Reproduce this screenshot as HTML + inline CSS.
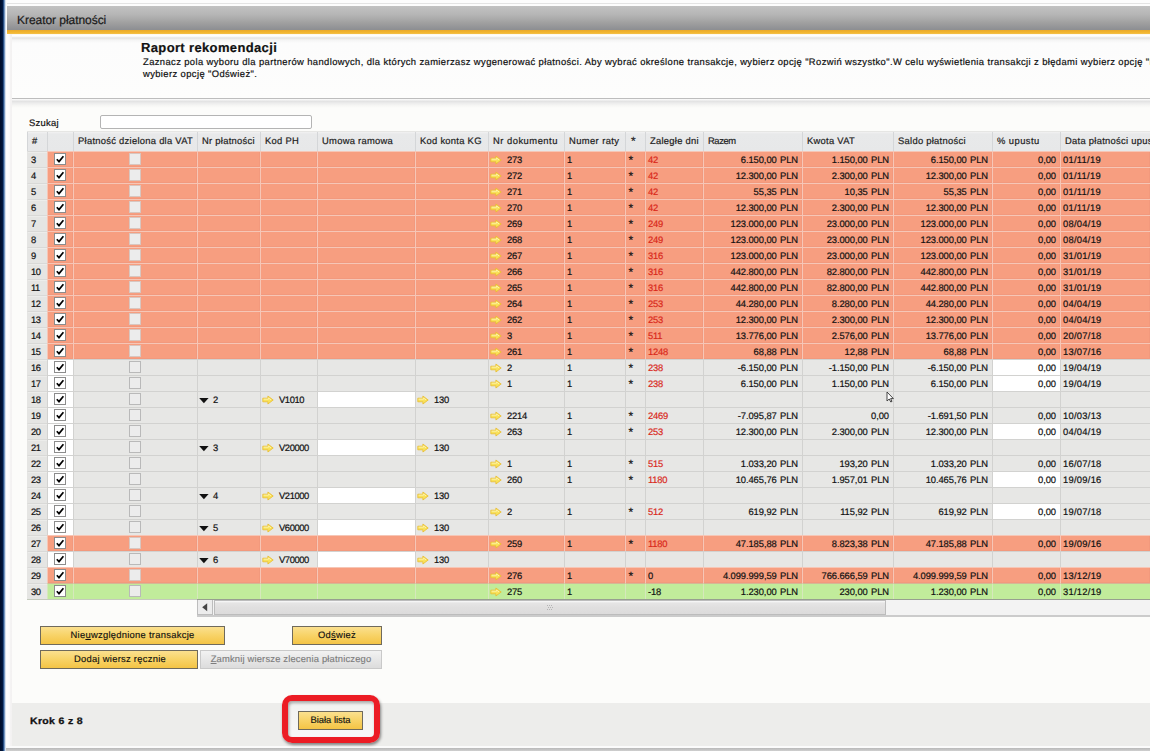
<!DOCTYPE html>
<html lang="pl">
<head>
<meta charset="utf-8">
<title>Kreator płatności</title>
<style>
html,body{margin:0;padding:0}
body{width:1150px;height:751px;overflow:hidden;position:relative;background:#fcfcfa;font-family:"Liberation Sans",sans-serif;font-size:9.4px;color:#111;-webkit-text-stroke:.2px;text-rendering:geometricPrecision}
.abs{position:absolute}
.navy{left:0;top:0;width:7px;height:751px;background:linear-gradient(90deg,#000e2a 0,#00143a 2.4px,#0e3162 3.1px,#3f6aa3 3.9px,#9db7d8 4.9px,#f4f7fa 5.8px,#fdfdfd 6.4px)}
.topstrip{left:6px;top:0;width:1144px;height:6px;background:#fdfdfd}
.topline{left:6px;top:3px;width:1144px;height:1px;background:#e4e4e4}
.titlebar{left:7px;top:6px;width:1144px;height:24px;background:linear-gradient(180deg,#c2c2c2 0,#b6b6b6 35%,#a0a0a0 70%,#8c8e92 100%)}
.titletxt{left:17px;top:8px;letter-spacing:-.05px;height:24px;line-height:24px;font-size:12px;color:#1a1a1a;white-space:pre}
.orange{left:6px;top:30px;width:1144px;height:4px;background:linear-gradient(180deg,#e9a92a,#f2b630 60%,#f4c04a)}
.undershadow{left:6px;top:34px;width:1144px;height:4px;background:linear-gradient(180deg,#fdf6e6 0,#ffffff 30%,#f6f6f6 75%,#dedede 100%)}
.leftgap{left:6px;top:34px;width:6px;height:717px;background:linear-gradient(90deg,#ffffff 0,#fbfbfb 55%,#f1efef 85%,#f6f5f5 100%)}
.hpanel{left:12px;top:38px;width:1138px;height:60px;background:linear-gradient(180deg,#e3e3e3 0,#f4f4f4 2px,#fcfcfc 5px,#fdfdfc 100%)}
.hline{left:12px;top:98px;width:1138px;height:1px;background:#bdbdbd}
.hshadow{left:12px;top:99px;width:1138px;height:9px;background:linear-gradient(180deg,#fbfbfb 0,#f4f4f4 1px,#e2e2e2 2.2px,#ececec 45%,#f7f7f5 75%,#fcfcfa 100%)}
.h1{left:141px;top:39.5px;font-size:13px;font-weight:bold;letter-spacing:.36px;color:#111;white-space:pre;line-height:16px}
.desc{left:143px;top:56px;width:1200px;font-size:9.4px;line-height:11.5px;letter-spacing:.4px;color:#111;white-space:pre}
.szukaj{left:29px;top:115.5px;line-height:14px;font-size:9.4px;letter-spacing:.28px;white-space:pre}
.sinput{left:100px;top:115px;width:210px;height:12px;border:1px solid #b4b4b4;border-radius:2px;background:#fff}
.grid{position:absolute;left:27px;top:131px;width:1123px;height:468px;background:#e6e6e4;border-bottom:1px solid #c4cabc}
.tbl{left:197px;top:599px;width:953px;height:1px;background:#979f90}
.hr{position:absolute;left:0;top:1px;width:1123px;height:19px;background:linear-gradient(180deg,#f2f2f2 0,#e8e9ea 2px,#e7e8e9 100%)}
.hc{position:absolute;top:0;height:19px;line-height:18px;box-sizing:border-box;border-left:1px solid #d4d6d8;padding-left:4px;white-space:pre;overflow:hidden;color:#222;letter-spacing:.28px}
.row{position:absolute;left:0;width:1123px;height:16px}
.c{position:absolute;top:0;height:16px;line-height:16px;box-sizing:border-box;border-left:1px solid #d2d2d0;border-top:1px solid #d2d2d0;white-space:pre;overflow:hidden;letter-spacing:-.2px}
.red .c{background:#f79e80;border-color:#f6c6b6;box-shadow:inset -1px -1px 0 rgba(120,60,40,.04)}
.gry .c{background:#e7e7e5}
.grn .c{background:#c1ec9b;border-color:#d6e8bc;border-top-color:#d4b896}
.row .c.num{background:#e5e5e3;border-color:#d9d9d7;border-left-color:#e5e5e3;padding-left:3px;letter-spacing:-.5px;box-shadow:inset 0 1px 0 #ececea}
.c.wh{background:#fff}
.c.l{padding-left:2px}
.c.t{padding-left:2px}
.c.st{padding-left:2px}
.sr{position:absolute;left:2.6px;top:1.9px;font-size:12px;line-height:12px;letter-spacing:0;-webkit-text-stroke:.2px}
.hc .sr{left:5px;top:3.4px}
.c.rd{color:#d9281a;-webkit-text-stroke:.18px}
.c.rt{text-align:right;padding-right:4px;letter-spacing:-.08px;word-spacing:.8px}
.c.ctr{text-align:center}
.c.dt{letter-spacing:.26px;padding-left:2px}
.cb{position:absolute;left:6px;top:1px;width:10px;height:10px;border:1px solid #8c8c8c;background:#fff}
.cb svg{position:absolute;left:0;top:0}
.ub{position:absolute;left:55px;top:1px;width:10px;height:10px;border:1px solid #b9b9b9;background:#ececec}
.red .ub{border-color:#d8c6c0}
.ar{position:absolute;left:1px;top:2.6px}
.at{position:absolute;left:18px;top:0}
.at.v{letter-spacing:-.4px}
.tri{position:absolute;left:1px;top:6px}
.gt{position:absolute;left:15px;top:0}
.sb{left:197px;top:599px;width:953px;height:16px;background:#f3f3f3;border-bottom:2px solid #cbcbcb}
.sbbtn{left:197px;top:599px;width:16px;height:16px;border:1px solid #bdbdbd;box-sizing:border-box;background:#ececec}
.sbthumb{left:214px;top:600px;width:672px;height:15px;box-sizing:border-box;border:1px solid #bcbcbc;background:linear-gradient(180deg,#fafafa 0,#e6e5e5 2px,#e0dfdf 50%,#dcdbdb 100%)}
.btn{box-sizing:border-box;height:19.2px;line-height:15.6px;border:1px solid #6f6a5c;text-align:center;font-size:9.4px;letter-spacing:.28px;color:#111;-webkit-text-stroke:.15px;background:linear-gradient(180deg,#fbe08f 0,#f8d46a 45%,#f4c445 100%);white-space:pre}
.btn.dis{border-color:#c9c9c9;background:linear-gradient(180deg,#f2f2f2,#dcdcdc);color:#7d7d7d}
.footer{left:12px;top:703px;width:1138px;height:43px;background:#ededeb}
.fline1{left:6px;top:746px;width:1144px;height:2px;background:#fbfbfb}
.fline2{left:6px;top:748px;width:1144px;height:3px;background:linear-gradient(180deg,#b9b9b9,#cfcfcf)}
.krok{left:30px;top:714px;font-weight:bold;font-size:9.4px;letter-spacing:.3px;line-height:14px;white-space:pre;transform:scaleX(1.12);transform-origin:0 50%;-webkit-text-stroke:.3px}
.redbox{left:282px;top:695px;width:98px;height:48px;box-sizing:border-box;border:6px solid #ec1c24;border-radius:10px;box-shadow:1px 2px 3px rgba(0,0,0,.45),inset 1px 2px 3px rgba(0,0,0,.35);background:linear-gradient(180deg,rgba(255,255,255,.25),rgba(255,255,255,.6))}
</style>
</head>
<body>
<div class="abs topstrip"></div>
<div class="abs topline"></div>
<div class="abs titlebar"></div>
<div class="abs titletxt">Kreator płatności</div>
<div class="abs orange"></div>
<div class="abs undershadow"></div>
<div class="abs leftgap"></div>
<div class="abs hpanel"></div>
<div class="abs hline"></div>
<div class="abs hshadow"></div>
<div class="abs navy"></div>
<div class="abs h1">Raport rekomendacji</div>
<div class="abs desc">Zaznacz pola wyboru dla partnerów handlowych, dla których zamierzasz wygenerować płatności. Aby wybrać określone transakcje, wybierz opcję "Rozwiń wszystko".W celu wyświetlenia transakcji z błędami wybierz opcję "Rozwiń"
wybierz opcję "Odśwież".</div>
<div class="abs szukaj">Szukaj</div>
<div class="abs sinput"></div>
<div class="grid">
<div class="hr">
<div class="hc" style="left:0px;width:20px;letter-spacing:0.01px">#</div>
<div class="hc" style="left:20px;width:26px"></div>
<div class="hc" style="left:46px;width:124px">Płatność dzielona dla VAT</div>
<div class="hc" style="left:170px;width:63px">Nr płatności</div>
<div class="hc" style="left:233px;width:57px">Kod PH</div>
<div class="hc" style="left:290px;width:98px">Umowa ramowa</div>
<div class="hc" style="left:388px;width:73px">Kod konta KG</div>
<div class="hc" style="left:461px;width:76px;letter-spacing:0.5px">Nr dokumentu</div>
<div class="hc" style="left:537px;width:61px;letter-spacing:0.4px">Numer raty</div>
<div class="hc" style="left:598px;width:20px"><span class="sr">*</span></div>
<div class="hc" style="left:618px;width:58px">Zaległe dni</div>
<div class="hc" style="left:676px;width:99px;letter-spacing:-0.4px">Razem</div>
<div class="hc" style="left:775px;width:91px">Kwota VAT</div>
<div class="hc" style="left:866px;width:99px">Saldo płatności</div>
<div class="hc" style="left:965px;width:68px;letter-spacing:0.45px">% upustu</div>
<div class="hc" style="left:1033px;width:90px">Data płatności upus</div>
</div>
<div class="row red" style="top:20px">
<div class="c num" style="left:0px;width:20px">3</div>
<div class="c cbc" style="left:20px;width:26px"><span class="cb"><svg width="10" height="10" viewBox="0 0 10 10"><path d="M1.8 5.2L4 7.6L8.4 2.2" fill="none" stroke="#000" stroke-width="1.7"/></svg></span></div>
<div class="c ctr" style="left:46px;width:124px"><span class="ub"></span></div>
<div class="c l" style="left:170px;width:63px"></div>
<div class="c l" style="left:233px;width:57px"></div>
<div class="c l" style="left:290px;width:98px"></div>
<div class="c l" style="left:388px;width:73px"></div>
<div class="c l" style="left:461px;width:76px"><svg class="ar" width="12" height="10" viewBox="0 0 12 10"><path d="M0.8 3.2H5.9V1L11.2 5L5.9 9V6.8H0.8Z" fill="#f9e25a" stroke="#e9bd30" stroke-width="0.8" stroke-linejoin="round"/><path d="M1.6 4.2H6.6V3L9 4.9" fill="none" stroke="#fdf3b0" stroke-width="0.9"/></svg><span class="at">273</span></div>
<div class="c l t" style="left:537px;width:61px">1</div>
<div class="c l st" style="left:598px;width:20px"><span class="sr">*</span></div>
<div class="c l t rd" style="left:618px;width:58px">42</div>
<div class="c rt" style="left:676px;width:99px">6.150,00 PLN</div>
<div class="c rt" style="left:775px;width:91px">1.150,00 PLN</div>
<div class="c rt" style="left:866px;width:99px">6.150,00 PLN</div>
<div class="c rt" style="left:965px;width:68px">0,00</div>
<div class="c l t dt" style="left:1033px;width:90px">01/11/19</div>
</div>
<div class="row red" style="top:36px">
<div class="c num" style="left:0px;width:20px">4</div>
<div class="c cbc" style="left:20px;width:26px"><span class="cb"><svg width="10" height="10" viewBox="0 0 10 10"><path d="M1.8 5.2L4 7.6L8.4 2.2" fill="none" stroke="#000" stroke-width="1.7"/></svg></span></div>
<div class="c ctr" style="left:46px;width:124px"><span class="ub"></span></div>
<div class="c l" style="left:170px;width:63px"></div>
<div class="c l" style="left:233px;width:57px"></div>
<div class="c l" style="left:290px;width:98px"></div>
<div class="c l" style="left:388px;width:73px"></div>
<div class="c l" style="left:461px;width:76px"><svg class="ar" width="12" height="10" viewBox="0 0 12 10"><path d="M0.8 3.2H5.9V1L11.2 5L5.9 9V6.8H0.8Z" fill="#f9e25a" stroke="#e9bd30" stroke-width="0.8" stroke-linejoin="round"/><path d="M1.6 4.2H6.6V3L9 4.9" fill="none" stroke="#fdf3b0" stroke-width="0.9"/></svg><span class="at">272</span></div>
<div class="c l t" style="left:537px;width:61px">1</div>
<div class="c l st" style="left:598px;width:20px"><span class="sr">*</span></div>
<div class="c l t rd" style="left:618px;width:58px">42</div>
<div class="c rt" style="left:676px;width:99px">12.300,00 PLN</div>
<div class="c rt" style="left:775px;width:91px">2.300,00 PLN</div>
<div class="c rt" style="left:866px;width:99px">12.300,00 PLN</div>
<div class="c rt" style="left:965px;width:68px">0,00</div>
<div class="c l t dt" style="left:1033px;width:90px">01/11/19</div>
</div>
<div class="row red" style="top:52px">
<div class="c num" style="left:0px;width:20px">5</div>
<div class="c cbc" style="left:20px;width:26px"><span class="cb"><svg width="10" height="10" viewBox="0 0 10 10"><path d="M1.8 5.2L4 7.6L8.4 2.2" fill="none" stroke="#000" stroke-width="1.7"/></svg></span></div>
<div class="c ctr" style="left:46px;width:124px"><span class="ub"></span></div>
<div class="c l" style="left:170px;width:63px"></div>
<div class="c l" style="left:233px;width:57px"></div>
<div class="c l" style="left:290px;width:98px"></div>
<div class="c l" style="left:388px;width:73px"></div>
<div class="c l" style="left:461px;width:76px"><svg class="ar" width="12" height="10" viewBox="0 0 12 10"><path d="M0.8 3.2H5.9V1L11.2 5L5.9 9V6.8H0.8Z" fill="#f9e25a" stroke="#e9bd30" stroke-width="0.8" stroke-linejoin="round"/><path d="M1.6 4.2H6.6V3L9 4.9" fill="none" stroke="#fdf3b0" stroke-width="0.9"/></svg><span class="at">271</span></div>
<div class="c l t" style="left:537px;width:61px">1</div>
<div class="c l st" style="left:598px;width:20px"><span class="sr">*</span></div>
<div class="c l t rd" style="left:618px;width:58px">42</div>
<div class="c rt" style="left:676px;width:99px">55,35 PLN</div>
<div class="c rt" style="left:775px;width:91px">10,35 PLN</div>
<div class="c rt" style="left:866px;width:99px">55,35 PLN</div>
<div class="c rt" style="left:965px;width:68px">0,00</div>
<div class="c l t dt" style="left:1033px;width:90px">01/11/19</div>
</div>
<div class="row red" style="top:68px">
<div class="c num" style="left:0px;width:20px">6</div>
<div class="c cbc" style="left:20px;width:26px"><span class="cb"><svg width="10" height="10" viewBox="0 0 10 10"><path d="M1.8 5.2L4 7.6L8.4 2.2" fill="none" stroke="#000" stroke-width="1.7"/></svg></span></div>
<div class="c ctr" style="left:46px;width:124px"><span class="ub"></span></div>
<div class="c l" style="left:170px;width:63px"></div>
<div class="c l" style="left:233px;width:57px"></div>
<div class="c l" style="left:290px;width:98px"></div>
<div class="c l" style="left:388px;width:73px"></div>
<div class="c l" style="left:461px;width:76px"><svg class="ar" width="12" height="10" viewBox="0 0 12 10"><path d="M0.8 3.2H5.9V1L11.2 5L5.9 9V6.8H0.8Z" fill="#f9e25a" stroke="#e9bd30" stroke-width="0.8" stroke-linejoin="round"/><path d="M1.6 4.2H6.6V3L9 4.9" fill="none" stroke="#fdf3b0" stroke-width="0.9"/></svg><span class="at">270</span></div>
<div class="c l t" style="left:537px;width:61px">1</div>
<div class="c l st" style="left:598px;width:20px"><span class="sr">*</span></div>
<div class="c l t rd" style="left:618px;width:58px">42</div>
<div class="c rt" style="left:676px;width:99px">12.300,00 PLN</div>
<div class="c rt" style="left:775px;width:91px">2.300,00 PLN</div>
<div class="c rt" style="left:866px;width:99px">12.300,00 PLN</div>
<div class="c rt" style="left:965px;width:68px">0,00</div>
<div class="c l t dt" style="left:1033px;width:90px">01/11/19</div>
</div>
<div class="row red" style="top:84px">
<div class="c num" style="left:0px;width:20px">7</div>
<div class="c cbc" style="left:20px;width:26px"><span class="cb"><svg width="10" height="10" viewBox="0 0 10 10"><path d="M1.8 5.2L4 7.6L8.4 2.2" fill="none" stroke="#000" stroke-width="1.7"/></svg></span></div>
<div class="c ctr" style="left:46px;width:124px"><span class="ub"></span></div>
<div class="c l" style="left:170px;width:63px"></div>
<div class="c l" style="left:233px;width:57px"></div>
<div class="c l" style="left:290px;width:98px"></div>
<div class="c l" style="left:388px;width:73px"></div>
<div class="c l" style="left:461px;width:76px"><svg class="ar" width="12" height="10" viewBox="0 0 12 10"><path d="M0.8 3.2H5.9V1L11.2 5L5.9 9V6.8H0.8Z" fill="#f9e25a" stroke="#e9bd30" stroke-width="0.8" stroke-linejoin="round"/><path d="M1.6 4.2H6.6V3L9 4.9" fill="none" stroke="#fdf3b0" stroke-width="0.9"/></svg><span class="at">269</span></div>
<div class="c l t" style="left:537px;width:61px">1</div>
<div class="c l st" style="left:598px;width:20px"><span class="sr">*</span></div>
<div class="c l t rd" style="left:618px;width:58px">249</div>
<div class="c rt" style="left:676px;width:99px">123.000,00 PLN</div>
<div class="c rt" style="left:775px;width:91px">23.000,00 PLN</div>
<div class="c rt" style="left:866px;width:99px">123.000,00 PLN</div>
<div class="c rt" style="left:965px;width:68px">0,00</div>
<div class="c l t dt" style="left:1033px;width:90px">08/04/19</div>
</div>
<div class="row red" style="top:100px">
<div class="c num" style="left:0px;width:20px">8</div>
<div class="c cbc" style="left:20px;width:26px"><span class="cb"><svg width="10" height="10" viewBox="0 0 10 10"><path d="M1.8 5.2L4 7.6L8.4 2.2" fill="none" stroke="#000" stroke-width="1.7"/></svg></span></div>
<div class="c ctr" style="left:46px;width:124px"><span class="ub"></span></div>
<div class="c l" style="left:170px;width:63px"></div>
<div class="c l" style="left:233px;width:57px"></div>
<div class="c l" style="left:290px;width:98px"></div>
<div class="c l" style="left:388px;width:73px"></div>
<div class="c l" style="left:461px;width:76px"><svg class="ar" width="12" height="10" viewBox="0 0 12 10"><path d="M0.8 3.2H5.9V1L11.2 5L5.9 9V6.8H0.8Z" fill="#f9e25a" stroke="#e9bd30" stroke-width="0.8" stroke-linejoin="round"/><path d="M1.6 4.2H6.6V3L9 4.9" fill="none" stroke="#fdf3b0" stroke-width="0.9"/></svg><span class="at">268</span></div>
<div class="c l t" style="left:537px;width:61px">1</div>
<div class="c l st" style="left:598px;width:20px"><span class="sr">*</span></div>
<div class="c l t rd" style="left:618px;width:58px">249</div>
<div class="c rt" style="left:676px;width:99px">123.000,00 PLN</div>
<div class="c rt" style="left:775px;width:91px">23.000,00 PLN</div>
<div class="c rt" style="left:866px;width:99px">123.000,00 PLN</div>
<div class="c rt" style="left:965px;width:68px">0,00</div>
<div class="c l t dt" style="left:1033px;width:90px">08/04/19</div>
</div>
<div class="row red" style="top:116px">
<div class="c num" style="left:0px;width:20px">9</div>
<div class="c cbc" style="left:20px;width:26px"><span class="cb"><svg width="10" height="10" viewBox="0 0 10 10"><path d="M1.8 5.2L4 7.6L8.4 2.2" fill="none" stroke="#000" stroke-width="1.7"/></svg></span></div>
<div class="c ctr" style="left:46px;width:124px"><span class="ub"></span></div>
<div class="c l" style="left:170px;width:63px"></div>
<div class="c l" style="left:233px;width:57px"></div>
<div class="c l" style="left:290px;width:98px"></div>
<div class="c l" style="left:388px;width:73px"></div>
<div class="c l" style="left:461px;width:76px"><svg class="ar" width="12" height="10" viewBox="0 0 12 10"><path d="M0.8 3.2H5.9V1L11.2 5L5.9 9V6.8H0.8Z" fill="#f9e25a" stroke="#e9bd30" stroke-width="0.8" stroke-linejoin="round"/><path d="M1.6 4.2H6.6V3L9 4.9" fill="none" stroke="#fdf3b0" stroke-width="0.9"/></svg><span class="at">267</span></div>
<div class="c l t" style="left:537px;width:61px">1</div>
<div class="c l st" style="left:598px;width:20px"><span class="sr">*</span></div>
<div class="c l t rd" style="left:618px;width:58px">316</div>
<div class="c rt" style="left:676px;width:99px">123.000,00 PLN</div>
<div class="c rt" style="left:775px;width:91px">23.000,00 PLN</div>
<div class="c rt" style="left:866px;width:99px">123.000,00 PLN</div>
<div class="c rt" style="left:965px;width:68px">0,00</div>
<div class="c l t dt" style="left:1033px;width:90px">31/01/19</div>
</div>
<div class="row red" style="top:132px">
<div class="c num" style="left:0px;width:20px">10</div>
<div class="c cbc" style="left:20px;width:26px"><span class="cb"><svg width="10" height="10" viewBox="0 0 10 10"><path d="M1.8 5.2L4 7.6L8.4 2.2" fill="none" stroke="#000" stroke-width="1.7"/></svg></span></div>
<div class="c ctr" style="left:46px;width:124px"><span class="ub"></span></div>
<div class="c l" style="left:170px;width:63px"></div>
<div class="c l" style="left:233px;width:57px"></div>
<div class="c l" style="left:290px;width:98px"></div>
<div class="c l" style="left:388px;width:73px"></div>
<div class="c l" style="left:461px;width:76px"><svg class="ar" width="12" height="10" viewBox="0 0 12 10"><path d="M0.8 3.2H5.9V1L11.2 5L5.9 9V6.8H0.8Z" fill="#f9e25a" stroke="#e9bd30" stroke-width="0.8" stroke-linejoin="round"/><path d="M1.6 4.2H6.6V3L9 4.9" fill="none" stroke="#fdf3b0" stroke-width="0.9"/></svg><span class="at">266</span></div>
<div class="c l t" style="left:537px;width:61px">1</div>
<div class="c l st" style="left:598px;width:20px"><span class="sr">*</span></div>
<div class="c l t rd" style="left:618px;width:58px">316</div>
<div class="c rt" style="left:676px;width:99px">442.800,00 PLN</div>
<div class="c rt" style="left:775px;width:91px">82.800,00 PLN</div>
<div class="c rt" style="left:866px;width:99px">442.800,00 PLN</div>
<div class="c rt" style="left:965px;width:68px">0,00</div>
<div class="c l t dt" style="left:1033px;width:90px">31/01/19</div>
</div>
<div class="row red" style="top:148px">
<div class="c num" style="left:0px;width:20px">11</div>
<div class="c cbc" style="left:20px;width:26px"><span class="cb"><svg width="10" height="10" viewBox="0 0 10 10"><path d="M1.8 5.2L4 7.6L8.4 2.2" fill="none" stroke="#000" stroke-width="1.7"/></svg></span></div>
<div class="c ctr" style="left:46px;width:124px"><span class="ub"></span></div>
<div class="c l" style="left:170px;width:63px"></div>
<div class="c l" style="left:233px;width:57px"></div>
<div class="c l" style="left:290px;width:98px"></div>
<div class="c l" style="left:388px;width:73px"></div>
<div class="c l" style="left:461px;width:76px"><svg class="ar" width="12" height="10" viewBox="0 0 12 10"><path d="M0.8 3.2H5.9V1L11.2 5L5.9 9V6.8H0.8Z" fill="#f9e25a" stroke="#e9bd30" stroke-width="0.8" stroke-linejoin="round"/><path d="M1.6 4.2H6.6V3L9 4.9" fill="none" stroke="#fdf3b0" stroke-width="0.9"/></svg><span class="at">265</span></div>
<div class="c l t" style="left:537px;width:61px">1</div>
<div class="c l st" style="left:598px;width:20px"><span class="sr">*</span></div>
<div class="c l t rd" style="left:618px;width:58px">316</div>
<div class="c rt" style="left:676px;width:99px">442.800,00 PLN</div>
<div class="c rt" style="left:775px;width:91px">82.800,00 PLN</div>
<div class="c rt" style="left:866px;width:99px">442.800,00 PLN</div>
<div class="c rt" style="left:965px;width:68px">0,00</div>
<div class="c l t dt" style="left:1033px;width:90px">31/01/19</div>
</div>
<div class="row red" style="top:164px">
<div class="c num" style="left:0px;width:20px">12</div>
<div class="c cbc" style="left:20px;width:26px"><span class="cb"><svg width="10" height="10" viewBox="0 0 10 10"><path d="M1.8 5.2L4 7.6L8.4 2.2" fill="none" stroke="#000" stroke-width="1.7"/></svg></span></div>
<div class="c ctr" style="left:46px;width:124px"><span class="ub"></span></div>
<div class="c l" style="left:170px;width:63px"></div>
<div class="c l" style="left:233px;width:57px"></div>
<div class="c l" style="left:290px;width:98px"></div>
<div class="c l" style="left:388px;width:73px"></div>
<div class="c l" style="left:461px;width:76px"><svg class="ar" width="12" height="10" viewBox="0 0 12 10"><path d="M0.8 3.2H5.9V1L11.2 5L5.9 9V6.8H0.8Z" fill="#f9e25a" stroke="#e9bd30" stroke-width="0.8" stroke-linejoin="round"/><path d="M1.6 4.2H6.6V3L9 4.9" fill="none" stroke="#fdf3b0" stroke-width="0.9"/></svg><span class="at">264</span></div>
<div class="c l t" style="left:537px;width:61px">1</div>
<div class="c l st" style="left:598px;width:20px"><span class="sr">*</span></div>
<div class="c l t rd" style="left:618px;width:58px">253</div>
<div class="c rt" style="left:676px;width:99px">44.280,00 PLN</div>
<div class="c rt" style="left:775px;width:91px">8.280,00 PLN</div>
<div class="c rt" style="left:866px;width:99px">44.280,00 PLN</div>
<div class="c rt" style="left:965px;width:68px">0,00</div>
<div class="c l t dt" style="left:1033px;width:90px">04/04/19</div>
</div>
<div class="row red" style="top:180px">
<div class="c num" style="left:0px;width:20px">13</div>
<div class="c cbc" style="left:20px;width:26px"><span class="cb"><svg width="10" height="10" viewBox="0 0 10 10"><path d="M1.8 5.2L4 7.6L8.4 2.2" fill="none" stroke="#000" stroke-width="1.7"/></svg></span></div>
<div class="c ctr" style="left:46px;width:124px"><span class="ub"></span></div>
<div class="c l" style="left:170px;width:63px"></div>
<div class="c l" style="left:233px;width:57px"></div>
<div class="c l" style="left:290px;width:98px"></div>
<div class="c l" style="left:388px;width:73px"></div>
<div class="c l" style="left:461px;width:76px"><svg class="ar" width="12" height="10" viewBox="0 0 12 10"><path d="M0.8 3.2H5.9V1L11.2 5L5.9 9V6.8H0.8Z" fill="#f9e25a" stroke="#e9bd30" stroke-width="0.8" stroke-linejoin="round"/><path d="M1.6 4.2H6.6V3L9 4.9" fill="none" stroke="#fdf3b0" stroke-width="0.9"/></svg><span class="at">262</span></div>
<div class="c l t" style="left:537px;width:61px">1</div>
<div class="c l st" style="left:598px;width:20px"><span class="sr">*</span></div>
<div class="c l t rd" style="left:618px;width:58px">253</div>
<div class="c rt" style="left:676px;width:99px">12.300,00 PLN</div>
<div class="c rt" style="left:775px;width:91px">2.300,00 PLN</div>
<div class="c rt" style="left:866px;width:99px">12.300,00 PLN</div>
<div class="c rt" style="left:965px;width:68px">0,00</div>
<div class="c l t dt" style="left:1033px;width:90px">04/04/19</div>
</div>
<div class="row red" style="top:196px">
<div class="c num" style="left:0px;width:20px">14</div>
<div class="c cbc" style="left:20px;width:26px"><span class="cb"><svg width="10" height="10" viewBox="0 0 10 10"><path d="M1.8 5.2L4 7.6L8.4 2.2" fill="none" stroke="#000" stroke-width="1.7"/></svg></span></div>
<div class="c ctr" style="left:46px;width:124px"><span class="ub"></span></div>
<div class="c l" style="left:170px;width:63px"></div>
<div class="c l" style="left:233px;width:57px"></div>
<div class="c l" style="left:290px;width:98px"></div>
<div class="c l" style="left:388px;width:73px"></div>
<div class="c l" style="left:461px;width:76px"><svg class="ar" width="12" height="10" viewBox="0 0 12 10"><path d="M0.8 3.2H5.9V1L11.2 5L5.9 9V6.8H0.8Z" fill="#f9e25a" stroke="#e9bd30" stroke-width="0.8" stroke-linejoin="round"/><path d="M1.6 4.2H6.6V3L9 4.9" fill="none" stroke="#fdf3b0" stroke-width="0.9"/></svg><span class="at">3</span></div>
<div class="c l t" style="left:537px;width:61px">1</div>
<div class="c l st" style="left:598px;width:20px"><span class="sr">*</span></div>
<div class="c l t rd" style="left:618px;width:58px">511</div>
<div class="c rt" style="left:676px;width:99px">13.776,00 PLN</div>
<div class="c rt" style="left:775px;width:91px">2.576,00 PLN</div>
<div class="c rt" style="left:866px;width:99px">13.776,00 PLN</div>
<div class="c rt" style="left:965px;width:68px">0,00</div>
<div class="c l t dt" style="left:1033px;width:90px">20/07/18</div>
</div>
<div class="row red" style="top:212px">
<div class="c num" style="left:0px;width:20px">15</div>
<div class="c cbc" style="left:20px;width:26px"><span class="cb"><svg width="10" height="10" viewBox="0 0 10 10"><path d="M1.8 5.2L4 7.6L8.4 2.2" fill="none" stroke="#000" stroke-width="1.7"/></svg></span></div>
<div class="c ctr" style="left:46px;width:124px"><span class="ub"></span></div>
<div class="c l" style="left:170px;width:63px"></div>
<div class="c l" style="left:233px;width:57px"></div>
<div class="c l" style="left:290px;width:98px"></div>
<div class="c l" style="left:388px;width:73px"></div>
<div class="c l" style="left:461px;width:76px"><svg class="ar" width="12" height="10" viewBox="0 0 12 10"><path d="M0.8 3.2H5.9V1L11.2 5L5.9 9V6.8H0.8Z" fill="#f9e25a" stroke="#e9bd30" stroke-width="0.8" stroke-linejoin="round"/><path d="M1.6 4.2H6.6V3L9 4.9" fill="none" stroke="#fdf3b0" stroke-width="0.9"/></svg><span class="at">261</span></div>
<div class="c l t" style="left:537px;width:61px">1</div>
<div class="c l st" style="left:598px;width:20px"><span class="sr">*</span></div>
<div class="c l t rd" style="left:618px;width:58px">1248</div>
<div class="c rt" style="left:676px;width:99px">68,88 PLN</div>
<div class="c rt" style="left:775px;width:91px">12,88 PLN</div>
<div class="c rt" style="left:866px;width:99px">68,88 PLN</div>
<div class="c rt" style="left:965px;width:68px">0,00</div>
<div class="c l t dt" style="left:1033px;width:90px">13/07/16</div>
</div>
<div class="row gry" style="top:228px">
<div class="c num" style="left:0px;width:20px">16</div>
<div class="c cbc wh" style="left:20px;width:26px"><span class="cb"><svg width="10" height="10" viewBox="0 0 10 10"><path d="M1.8 5.2L4 7.6L8.4 2.2" fill="none" stroke="#000" stroke-width="1.7"/></svg></span></div>
<div class="c ctr" style="left:46px;width:124px"><span class="ub"></span></div>
<div class="c l" style="left:170px;width:63px"></div>
<div class="c l" style="left:233px;width:57px"></div>
<div class="c l" style="left:290px;width:98px"></div>
<div class="c l" style="left:388px;width:73px"></div>
<div class="c l" style="left:461px;width:76px"><svg class="ar" width="12" height="10" viewBox="0 0 12 10"><path d="M0.8 3.2H5.9V1L11.2 5L5.9 9V6.8H0.8Z" fill="#f9e25a" stroke="#e9bd30" stroke-width="0.8" stroke-linejoin="round"/><path d="M1.6 4.2H6.6V3L9 4.9" fill="none" stroke="#fdf3b0" stroke-width="0.9"/></svg><span class="at">2</span></div>
<div class="c l t" style="left:537px;width:61px">1</div>
<div class="c l st" style="left:598px;width:20px"><span class="sr">*</span></div>
<div class="c l t rd" style="left:618px;width:58px">238</div>
<div class="c rt" style="left:676px;width:99px">-6.150,00 PLN</div>
<div class="c rt" style="left:775px;width:91px">-1.150,00 PLN</div>
<div class="c rt" style="left:866px;width:99px">-6.150,00 PLN</div>
<div class="c rt wh" style="left:965px;width:68px">0,00</div>
<div class="c l t dt" style="left:1033px;width:90px">19/04/19</div>
</div>
<div class="row gry" style="top:244px">
<div class="c num" style="left:0px;width:20px">17</div>
<div class="c cbc wh" style="left:20px;width:26px"><span class="cb"><svg width="10" height="10" viewBox="0 0 10 10"><path d="M1.8 5.2L4 7.6L8.4 2.2" fill="none" stroke="#000" stroke-width="1.7"/></svg></span></div>
<div class="c ctr" style="left:46px;width:124px"><span class="ub"></span></div>
<div class="c l" style="left:170px;width:63px"></div>
<div class="c l" style="left:233px;width:57px"></div>
<div class="c l" style="left:290px;width:98px"></div>
<div class="c l" style="left:388px;width:73px"></div>
<div class="c l" style="left:461px;width:76px"><svg class="ar" width="12" height="10" viewBox="0 0 12 10"><path d="M0.8 3.2H5.9V1L11.2 5L5.9 9V6.8H0.8Z" fill="#f9e25a" stroke="#e9bd30" stroke-width="0.8" stroke-linejoin="round"/><path d="M1.6 4.2H6.6V3L9 4.9" fill="none" stroke="#fdf3b0" stroke-width="0.9"/></svg><span class="at">1</span></div>
<div class="c l t" style="left:537px;width:61px">1</div>
<div class="c l st" style="left:598px;width:20px"><span class="sr">*</span></div>
<div class="c l t rd" style="left:618px;width:58px">238</div>
<div class="c rt" style="left:676px;width:99px">6.150,00 PLN</div>
<div class="c rt" style="left:775px;width:91px">1.150,00 PLN</div>
<div class="c rt" style="left:866px;width:99px">6.150,00 PLN</div>
<div class="c rt wh" style="left:965px;width:68px">0,00</div>
<div class="c l t dt" style="left:1033px;width:90px">19/04/19</div>
</div>
<div class="row gry" style="top:260px">
<div class="c num" style="left:0px;width:20px">18</div>
<div class="c cbc wh" style="left:20px;width:26px"><span class="cb"><svg width="10" height="10" viewBox="0 0 10 10"><path d="M1.8 5.2L4 7.6L8.4 2.2" fill="none" stroke="#000" stroke-width="1.7"/></svg></span></div>
<div class="c ctr" style="left:46px;width:124px"><span class="ub"></span></div>
<div class="c l" style="left:170px;width:63px"><svg class="tri" width="10" height="6" viewBox="0 0 10 6"><path d="M0.2 0H9.6L4.9 5.3Z" fill="#111"/></svg><span class="gt">2</span></div>
<div class="c l" style="left:233px;width:57px"><svg class="ar" width="12" height="10" viewBox="0 0 12 10"><path d="M0.8 3.2H5.9V1L11.2 5L5.9 9V6.8H0.8Z" fill="#f9e25a" stroke="#e9bd30" stroke-width="0.8" stroke-linejoin="round"/><path d="M1.6 4.2H6.6V3L9 4.9" fill="none" stroke="#fdf3b0" stroke-width="0.9"/></svg><span class="at v">V1010</span></div>
<div class="c l wh" style="left:290px;width:98px"></div>
<div class="c l" style="left:388px;width:73px"><svg class="ar" width="12" height="10" viewBox="0 0 12 10"><path d="M0.8 3.2H5.9V1L11.2 5L5.9 9V6.8H0.8Z" fill="#f9e25a" stroke="#e9bd30" stroke-width="0.8" stroke-linejoin="round"/><path d="M1.6 4.2H6.6V3L9 4.9" fill="none" stroke="#fdf3b0" stroke-width="0.9"/></svg><span class="at">130</span></div>
<div class="c l" style="left:461px;width:76px"></div>
<div class="c l t" style="left:537px;width:61px"></div>
<div class="c l st" style="left:598px;width:20px"></div>
<div class="c l t " style="left:618px;width:58px"></div>
<div class="c rt" style="left:676px;width:99px"></div>
<div class="c rt" style="left:775px;width:91px"></div>
<div class="c rt" style="left:866px;width:99px"></div>
<div class="c rt" style="left:965px;width:68px"></div>
<div class="c l t dt" style="left:1033px;width:90px"></div>
</div>
<div class="row gry" style="top:276px">
<div class="c num" style="left:0px;width:20px">19</div>
<div class="c cbc wh" style="left:20px;width:26px"><span class="cb"><svg width="10" height="10" viewBox="0 0 10 10"><path d="M1.8 5.2L4 7.6L8.4 2.2" fill="none" stroke="#000" stroke-width="1.7"/></svg></span></div>
<div class="c ctr" style="left:46px;width:124px"><span class="ub"></span></div>
<div class="c l" style="left:170px;width:63px"></div>
<div class="c l" style="left:233px;width:57px"></div>
<div class="c l" style="left:290px;width:98px"></div>
<div class="c l" style="left:388px;width:73px"></div>
<div class="c l" style="left:461px;width:76px"><svg class="ar" width="12" height="10" viewBox="0 0 12 10"><path d="M0.8 3.2H5.9V1L11.2 5L5.9 9V6.8H0.8Z" fill="#f9e25a" stroke="#e9bd30" stroke-width="0.8" stroke-linejoin="round"/><path d="M1.6 4.2H6.6V3L9 4.9" fill="none" stroke="#fdf3b0" stroke-width="0.9"/></svg><span class="at">2214</span></div>
<div class="c l t" style="left:537px;width:61px">1</div>
<div class="c l st" style="left:598px;width:20px"><span class="sr">*</span></div>
<div class="c l t rd" style="left:618px;width:58px">2469</div>
<div class="c rt" style="left:676px;width:99px">-7.095,87 PLN</div>
<div class="c rt" style="left:775px;width:91px">0,00</div>
<div class="c rt" style="left:866px;width:99px">-1.691,50 PLN</div>
<div class="c rt" style="left:965px;width:68px">0,00</div>
<div class="c l t dt" style="left:1033px;width:90px">10/03/13</div>
</div>
<div class="row gry" style="top:292px">
<div class="c num" style="left:0px;width:20px">20</div>
<div class="c cbc wh" style="left:20px;width:26px"><span class="cb"><svg width="10" height="10" viewBox="0 0 10 10"><path d="M1.8 5.2L4 7.6L8.4 2.2" fill="none" stroke="#000" stroke-width="1.7"/></svg></span></div>
<div class="c ctr" style="left:46px;width:124px"><span class="ub"></span></div>
<div class="c l" style="left:170px;width:63px"></div>
<div class="c l" style="left:233px;width:57px"></div>
<div class="c l" style="left:290px;width:98px"></div>
<div class="c l" style="left:388px;width:73px"></div>
<div class="c l" style="left:461px;width:76px"><svg class="ar" width="12" height="10" viewBox="0 0 12 10"><path d="M0.8 3.2H5.9V1L11.2 5L5.9 9V6.8H0.8Z" fill="#f9e25a" stroke="#e9bd30" stroke-width="0.8" stroke-linejoin="round"/><path d="M1.6 4.2H6.6V3L9 4.9" fill="none" stroke="#fdf3b0" stroke-width="0.9"/></svg><span class="at">263</span></div>
<div class="c l t" style="left:537px;width:61px">1</div>
<div class="c l st" style="left:598px;width:20px"><span class="sr">*</span></div>
<div class="c l t rd" style="left:618px;width:58px">253</div>
<div class="c rt" style="left:676px;width:99px">12.300,00 PLN</div>
<div class="c rt" style="left:775px;width:91px">2.300,00 PLN</div>
<div class="c rt" style="left:866px;width:99px">12.300,00 PLN</div>
<div class="c rt wh" style="left:965px;width:68px">0,00</div>
<div class="c l t dt" style="left:1033px;width:90px">04/04/19</div>
</div>
<div class="row gry" style="top:308px">
<div class="c num" style="left:0px;width:20px">21</div>
<div class="c cbc wh" style="left:20px;width:26px"><span class="cb"><svg width="10" height="10" viewBox="0 0 10 10"><path d="M1.8 5.2L4 7.6L8.4 2.2" fill="none" stroke="#000" stroke-width="1.7"/></svg></span></div>
<div class="c ctr" style="left:46px;width:124px"><span class="ub"></span></div>
<div class="c l" style="left:170px;width:63px"><svg class="tri" width="10" height="6" viewBox="0 0 10 6"><path d="M0.2 0H9.6L4.9 5.3Z" fill="#111"/></svg><span class="gt">3</span></div>
<div class="c l" style="left:233px;width:57px"><svg class="ar" width="12" height="10" viewBox="0 0 12 10"><path d="M0.8 3.2H5.9V1L11.2 5L5.9 9V6.8H0.8Z" fill="#f9e25a" stroke="#e9bd30" stroke-width="0.8" stroke-linejoin="round"/><path d="M1.6 4.2H6.6V3L9 4.9" fill="none" stroke="#fdf3b0" stroke-width="0.9"/></svg><span class="at v">V20000</span></div>
<div class="c l wh" style="left:290px;width:98px"></div>
<div class="c l" style="left:388px;width:73px"><svg class="ar" width="12" height="10" viewBox="0 0 12 10"><path d="M0.8 3.2H5.9V1L11.2 5L5.9 9V6.8H0.8Z" fill="#f9e25a" stroke="#e9bd30" stroke-width="0.8" stroke-linejoin="round"/><path d="M1.6 4.2H6.6V3L9 4.9" fill="none" stroke="#fdf3b0" stroke-width="0.9"/></svg><span class="at">130</span></div>
<div class="c l" style="left:461px;width:76px"></div>
<div class="c l t" style="left:537px;width:61px"></div>
<div class="c l st" style="left:598px;width:20px"></div>
<div class="c l t " style="left:618px;width:58px"></div>
<div class="c rt" style="left:676px;width:99px"></div>
<div class="c rt" style="left:775px;width:91px"></div>
<div class="c rt" style="left:866px;width:99px"></div>
<div class="c rt" style="left:965px;width:68px"></div>
<div class="c l t dt" style="left:1033px;width:90px"></div>
</div>
<div class="row gry" style="top:324px">
<div class="c num" style="left:0px;width:20px">22</div>
<div class="c cbc wh" style="left:20px;width:26px"><span class="cb"><svg width="10" height="10" viewBox="0 0 10 10"><path d="M1.8 5.2L4 7.6L8.4 2.2" fill="none" stroke="#000" stroke-width="1.7"/></svg></span></div>
<div class="c ctr" style="left:46px;width:124px"><span class="ub"></span></div>
<div class="c l" style="left:170px;width:63px"></div>
<div class="c l" style="left:233px;width:57px"></div>
<div class="c l" style="left:290px;width:98px"></div>
<div class="c l" style="left:388px;width:73px"></div>
<div class="c l" style="left:461px;width:76px"><svg class="ar" width="12" height="10" viewBox="0 0 12 10"><path d="M0.8 3.2H5.9V1L11.2 5L5.9 9V6.8H0.8Z" fill="#f9e25a" stroke="#e9bd30" stroke-width="0.8" stroke-linejoin="round"/><path d="M1.6 4.2H6.6V3L9 4.9" fill="none" stroke="#fdf3b0" stroke-width="0.9"/></svg><span class="at">1</span></div>
<div class="c l t" style="left:537px;width:61px">1</div>
<div class="c l st" style="left:598px;width:20px"><span class="sr">*</span></div>
<div class="c l t rd" style="left:618px;width:58px">515</div>
<div class="c rt" style="left:676px;width:99px">1.033,20 PLN</div>
<div class="c rt" style="left:775px;width:91px">193,20 PLN</div>
<div class="c rt" style="left:866px;width:99px">1.033,20 PLN</div>
<div class="c rt" style="left:965px;width:68px">0,00</div>
<div class="c l t dt" style="left:1033px;width:90px">16/07/18</div>
</div>
<div class="row gry" style="top:340px">
<div class="c num" style="left:0px;width:20px">23</div>
<div class="c cbc wh" style="left:20px;width:26px"><span class="cb"><svg width="10" height="10" viewBox="0 0 10 10"><path d="M1.8 5.2L4 7.6L8.4 2.2" fill="none" stroke="#000" stroke-width="1.7"/></svg></span></div>
<div class="c ctr" style="left:46px;width:124px"><span class="ub"></span></div>
<div class="c l" style="left:170px;width:63px"></div>
<div class="c l" style="left:233px;width:57px"></div>
<div class="c l" style="left:290px;width:98px"></div>
<div class="c l" style="left:388px;width:73px"></div>
<div class="c l" style="left:461px;width:76px"><svg class="ar" width="12" height="10" viewBox="0 0 12 10"><path d="M0.8 3.2H5.9V1L11.2 5L5.9 9V6.8H0.8Z" fill="#f9e25a" stroke="#e9bd30" stroke-width="0.8" stroke-linejoin="round"/><path d="M1.6 4.2H6.6V3L9 4.9" fill="none" stroke="#fdf3b0" stroke-width="0.9"/></svg><span class="at">260</span></div>
<div class="c l t" style="left:537px;width:61px">1</div>
<div class="c l st" style="left:598px;width:20px"><span class="sr">*</span></div>
<div class="c l t rd" style="left:618px;width:58px">1180</div>
<div class="c rt" style="left:676px;width:99px">10.465,76 PLN</div>
<div class="c rt" style="left:775px;width:91px">1.957,01 PLN</div>
<div class="c rt" style="left:866px;width:99px">10.465,76 PLN</div>
<div class="c rt wh" style="left:965px;width:68px">0,00</div>
<div class="c l t dt" style="left:1033px;width:90px">19/09/16</div>
</div>
<div class="row gry" style="top:356px">
<div class="c num" style="left:0px;width:20px">24</div>
<div class="c cbc wh" style="left:20px;width:26px"><span class="cb"><svg width="10" height="10" viewBox="0 0 10 10"><path d="M1.8 5.2L4 7.6L8.4 2.2" fill="none" stroke="#000" stroke-width="1.7"/></svg></span></div>
<div class="c ctr" style="left:46px;width:124px"><span class="ub"></span></div>
<div class="c l" style="left:170px;width:63px"><svg class="tri" width="10" height="6" viewBox="0 0 10 6"><path d="M0.2 0H9.6L4.9 5.3Z" fill="#111"/></svg><span class="gt">4</span></div>
<div class="c l" style="left:233px;width:57px"><svg class="ar" width="12" height="10" viewBox="0 0 12 10"><path d="M0.8 3.2H5.9V1L11.2 5L5.9 9V6.8H0.8Z" fill="#f9e25a" stroke="#e9bd30" stroke-width="0.8" stroke-linejoin="round"/><path d="M1.6 4.2H6.6V3L9 4.9" fill="none" stroke="#fdf3b0" stroke-width="0.9"/></svg><span class="at v">V21000</span></div>
<div class="c l wh" style="left:290px;width:98px"></div>
<div class="c l" style="left:388px;width:73px"><svg class="ar" width="12" height="10" viewBox="0 0 12 10"><path d="M0.8 3.2H5.9V1L11.2 5L5.9 9V6.8H0.8Z" fill="#f9e25a" stroke="#e9bd30" stroke-width="0.8" stroke-linejoin="round"/><path d="M1.6 4.2H6.6V3L9 4.9" fill="none" stroke="#fdf3b0" stroke-width="0.9"/></svg><span class="at">130</span></div>
<div class="c l" style="left:461px;width:76px"></div>
<div class="c l t" style="left:537px;width:61px"></div>
<div class="c l st" style="left:598px;width:20px"></div>
<div class="c l t " style="left:618px;width:58px"></div>
<div class="c rt" style="left:676px;width:99px"></div>
<div class="c rt" style="left:775px;width:91px"></div>
<div class="c rt" style="left:866px;width:99px"></div>
<div class="c rt" style="left:965px;width:68px"></div>
<div class="c l t dt" style="left:1033px;width:90px"></div>
</div>
<div class="row gry" style="top:372px">
<div class="c num" style="left:0px;width:20px">25</div>
<div class="c cbc wh" style="left:20px;width:26px"><span class="cb"><svg width="10" height="10" viewBox="0 0 10 10"><path d="M1.8 5.2L4 7.6L8.4 2.2" fill="none" stroke="#000" stroke-width="1.7"/></svg></span></div>
<div class="c ctr" style="left:46px;width:124px"><span class="ub"></span></div>
<div class="c l" style="left:170px;width:63px"></div>
<div class="c l" style="left:233px;width:57px"></div>
<div class="c l" style="left:290px;width:98px"></div>
<div class="c l" style="left:388px;width:73px"></div>
<div class="c l" style="left:461px;width:76px"><svg class="ar" width="12" height="10" viewBox="0 0 12 10"><path d="M0.8 3.2H5.9V1L11.2 5L5.9 9V6.8H0.8Z" fill="#f9e25a" stroke="#e9bd30" stroke-width="0.8" stroke-linejoin="round"/><path d="M1.6 4.2H6.6V3L9 4.9" fill="none" stroke="#fdf3b0" stroke-width="0.9"/></svg><span class="at">2</span></div>
<div class="c l t" style="left:537px;width:61px">1</div>
<div class="c l st" style="left:598px;width:20px"><span class="sr">*</span></div>
<div class="c l t rd" style="left:618px;width:58px">512</div>
<div class="c rt" style="left:676px;width:99px">619,92 PLN</div>
<div class="c rt" style="left:775px;width:91px">115,92 PLN</div>
<div class="c rt" style="left:866px;width:99px">619,92 PLN</div>
<div class="c rt wh" style="left:965px;width:68px">0,00</div>
<div class="c l t dt" style="left:1033px;width:90px">19/07/18</div>
</div>
<div class="row gry" style="top:388px">
<div class="c num" style="left:0px;width:20px">26</div>
<div class="c cbc wh" style="left:20px;width:26px"><span class="cb"><svg width="10" height="10" viewBox="0 0 10 10"><path d="M1.8 5.2L4 7.6L8.4 2.2" fill="none" stroke="#000" stroke-width="1.7"/></svg></span></div>
<div class="c ctr" style="left:46px;width:124px"><span class="ub"></span></div>
<div class="c l" style="left:170px;width:63px"><svg class="tri" width="10" height="6" viewBox="0 0 10 6"><path d="M0.2 0H9.6L4.9 5.3Z" fill="#111"/></svg><span class="gt">5</span></div>
<div class="c l" style="left:233px;width:57px"><svg class="ar" width="12" height="10" viewBox="0 0 12 10"><path d="M0.8 3.2H5.9V1L11.2 5L5.9 9V6.8H0.8Z" fill="#f9e25a" stroke="#e9bd30" stroke-width="0.8" stroke-linejoin="round"/><path d="M1.6 4.2H6.6V3L9 4.9" fill="none" stroke="#fdf3b0" stroke-width="0.9"/></svg><span class="at v">V60000</span></div>
<div class="c l wh" style="left:290px;width:98px"></div>
<div class="c l" style="left:388px;width:73px"><svg class="ar" width="12" height="10" viewBox="0 0 12 10"><path d="M0.8 3.2H5.9V1L11.2 5L5.9 9V6.8H0.8Z" fill="#f9e25a" stroke="#e9bd30" stroke-width="0.8" stroke-linejoin="round"/><path d="M1.6 4.2H6.6V3L9 4.9" fill="none" stroke="#fdf3b0" stroke-width="0.9"/></svg><span class="at">130</span></div>
<div class="c l" style="left:461px;width:76px"></div>
<div class="c l t" style="left:537px;width:61px"></div>
<div class="c l st" style="left:598px;width:20px"></div>
<div class="c l t " style="left:618px;width:58px"></div>
<div class="c rt" style="left:676px;width:99px"></div>
<div class="c rt" style="left:775px;width:91px"></div>
<div class="c rt" style="left:866px;width:99px"></div>
<div class="c rt" style="left:965px;width:68px"></div>
<div class="c l t dt" style="left:1033px;width:90px"></div>
</div>
<div class="row red" style="top:404px">
<div class="c num" style="left:0px;width:20px">27</div>
<div class="c cbc" style="left:20px;width:26px"><span class="cb"><svg width="10" height="10" viewBox="0 0 10 10"><path d="M1.8 5.2L4 7.6L8.4 2.2" fill="none" stroke="#000" stroke-width="1.7"/></svg></span></div>
<div class="c ctr" style="left:46px;width:124px"><span class="ub"></span></div>
<div class="c l" style="left:170px;width:63px"></div>
<div class="c l" style="left:233px;width:57px"></div>
<div class="c l" style="left:290px;width:98px"></div>
<div class="c l" style="left:388px;width:73px"></div>
<div class="c l" style="left:461px;width:76px"><svg class="ar" width="12" height="10" viewBox="0 0 12 10"><path d="M0.8 3.2H5.9V1L11.2 5L5.9 9V6.8H0.8Z" fill="#f9e25a" stroke="#e9bd30" stroke-width="0.8" stroke-linejoin="round"/><path d="M1.6 4.2H6.6V3L9 4.9" fill="none" stroke="#fdf3b0" stroke-width="0.9"/></svg><span class="at">259</span></div>
<div class="c l t" style="left:537px;width:61px">1</div>
<div class="c l st" style="left:598px;width:20px"><span class="sr">*</span></div>
<div class="c l t rd" style="left:618px;width:58px">1180</div>
<div class="c rt" style="left:676px;width:99px">47.185,88 PLN</div>
<div class="c rt" style="left:775px;width:91px">8.823,38 PLN</div>
<div class="c rt" style="left:866px;width:99px">47.185,88 PLN</div>
<div class="c rt" style="left:965px;width:68px">0,00</div>
<div class="c l t dt" style="left:1033px;width:90px">19/09/16</div>
</div>
<div class="row gry" style="top:420px">
<div class="c num" style="left:0px;width:20px">28</div>
<div class="c cbc wh" style="left:20px;width:26px"><span class="cb"><svg width="10" height="10" viewBox="0 0 10 10"><path d="M1.8 5.2L4 7.6L8.4 2.2" fill="none" stroke="#000" stroke-width="1.7"/></svg></span></div>
<div class="c ctr" style="left:46px;width:124px"><span class="ub"></span></div>
<div class="c l" style="left:170px;width:63px"><svg class="tri" width="10" height="6" viewBox="0 0 10 6"><path d="M0.2 0H9.6L4.9 5.3Z" fill="#111"/></svg><span class="gt">6</span></div>
<div class="c l" style="left:233px;width:57px"><svg class="ar" width="12" height="10" viewBox="0 0 12 10"><path d="M0.8 3.2H5.9V1L11.2 5L5.9 9V6.8H0.8Z" fill="#f9e25a" stroke="#e9bd30" stroke-width="0.8" stroke-linejoin="round"/><path d="M1.6 4.2H6.6V3L9 4.9" fill="none" stroke="#fdf3b0" stroke-width="0.9"/></svg><span class="at v">V70000</span></div>
<div class="c l wh" style="left:290px;width:98px"></div>
<div class="c l" style="left:388px;width:73px"><svg class="ar" width="12" height="10" viewBox="0 0 12 10"><path d="M0.8 3.2H5.9V1L11.2 5L5.9 9V6.8H0.8Z" fill="#f9e25a" stroke="#e9bd30" stroke-width="0.8" stroke-linejoin="round"/><path d="M1.6 4.2H6.6V3L9 4.9" fill="none" stroke="#fdf3b0" stroke-width="0.9"/></svg><span class="at">130</span></div>
<div class="c l" style="left:461px;width:76px"></div>
<div class="c l t" style="left:537px;width:61px"></div>
<div class="c l st" style="left:598px;width:20px"></div>
<div class="c l t " style="left:618px;width:58px"></div>
<div class="c rt" style="left:676px;width:99px"></div>
<div class="c rt" style="left:775px;width:91px"></div>
<div class="c rt" style="left:866px;width:99px"></div>
<div class="c rt" style="left:965px;width:68px"></div>
<div class="c l t dt" style="left:1033px;width:90px"></div>
</div>
<div class="row red" style="top:436px">
<div class="c num" style="left:0px;width:20px">29</div>
<div class="c cbc" style="left:20px;width:26px"><span class="cb"><svg width="10" height="10" viewBox="0 0 10 10"><path d="M1.8 5.2L4 7.6L8.4 2.2" fill="none" stroke="#000" stroke-width="1.7"/></svg></span></div>
<div class="c ctr" style="left:46px;width:124px"><span class="ub"></span></div>
<div class="c l" style="left:170px;width:63px"></div>
<div class="c l" style="left:233px;width:57px"></div>
<div class="c l" style="left:290px;width:98px"></div>
<div class="c l" style="left:388px;width:73px"></div>
<div class="c l" style="left:461px;width:76px"><svg class="ar" width="12" height="10" viewBox="0 0 12 10"><path d="M0.8 3.2H5.9V1L11.2 5L5.9 9V6.8H0.8Z" fill="#f9e25a" stroke="#e9bd30" stroke-width="0.8" stroke-linejoin="round"/><path d="M1.6 4.2H6.6V3L9 4.9" fill="none" stroke="#fdf3b0" stroke-width="0.9"/></svg><span class="at">276</span></div>
<div class="c l t" style="left:537px;width:61px">1</div>
<div class="c l st" style="left:598px;width:20px"><span class="sr">*</span></div>
<div class="c l t " style="left:618px;width:58px">0</div>
<div class="c rt" style="left:676px;width:99px">4.099.999,59 PLN</div>
<div class="c rt" style="left:775px;width:91px">766.666,59 PLN</div>
<div class="c rt" style="left:866px;width:99px">4.099.999,59 PLN</div>
<div class="c rt" style="left:965px;width:68px">0,00</div>
<div class="c l t dt" style="left:1033px;width:90px">13/12/19</div>
</div>
<div class="row grn" style="top:452px">
<div class="c num" style="left:0px;width:20px">30</div>
<div class="c cbc" style="left:20px;width:26px"><span class="cb"><svg width="10" height="10" viewBox="0 0 10 10"><path d="M1.8 5.2L4 7.6L8.4 2.2" fill="none" stroke="#000" stroke-width="1.7"/></svg></span></div>
<div class="c ctr" style="left:46px;width:124px"><span class="ub"></span></div>
<div class="c l" style="left:170px;width:63px"></div>
<div class="c l" style="left:233px;width:57px"></div>
<div class="c l" style="left:290px;width:98px"></div>
<div class="c l" style="left:388px;width:73px"></div>
<div class="c l" style="left:461px;width:76px"><svg class="ar" width="12" height="10" viewBox="0 0 12 10"><path d="M0.8 3.2H5.9V1L11.2 5L5.9 9V6.8H0.8Z" fill="#f9e25a" stroke="#e9bd30" stroke-width="0.8" stroke-linejoin="round"/><path d="M1.6 4.2H6.6V3L9 4.9" fill="none" stroke="#fdf3b0" stroke-width="0.9"/></svg><span class="at">275</span></div>
<div class="c l t" style="left:537px;width:61px">1</div>
<div class="c l st" style="left:598px;width:20px"></div>
<div class="c l t " style="left:618px;width:58px">-18</div>
<div class="c rt" style="left:676px;width:99px">1.230,00 PLN</div>
<div class="c rt" style="left:775px;width:91px">230,00 PLN</div>
<div class="c rt" style="left:866px;width:99px">1.230,00 PLN</div>
<div class="c rt" style="left:965px;width:68px">0,00</div>
<div class="c l t dt" style="left:1033px;width:90px">31/12/19</div>
</div>
</div>
<div class="abs sb"></div>
<div class="abs sbbtn"><svg width="14" height="14" viewBox="0 0 14 14" style="position:absolute;left:0;top:0"><path d="M9.2 3.2V11.2L4.2 7.2Z" fill="#444"/></svg></div>
<div class="abs tbl"></div>
<div class="abs sbthumb"><svg width="8" height="6" viewBox="0 0 8 6" style="position:absolute;left:332px;top:4px"><g fill="#b4b4b4"><rect x="0" y="0" width="1" height="1"/><rect x="2" y="0" width="1" height="1"/><rect x="4" y="0" width="1" height="1"/><rect x="1" y="2" width="1" height="1"/><rect x="3" y="2" width="1" height="1"/><rect x="5" y="2" width="1" height="1"/><rect x="0" y="4" width="1" height="1"/><rect x="2" y="4" width="1" height="1"/><rect x="4" y="4" width="1" height="1"/></g></svg></div>
<div class="abs btn" style="left:40px;top:625.5px;width:185px">Nie<u>u</u>względnione transakcje</div>
<div class="abs btn" style="left:292px;top:625.5px;width:90px">Od<u>ś</u>wież</div>
<div class="abs btn" style="left:40px;top:649.5px;width:158px;padding-left:2px">Dodaj wiersz ręcznie</div>
<div class="abs btn dis" style="left:200px;top:649.5px;width:182px;letter-spacing:.18px"><u>Z</u>amknij wiersze zlecenia płatniczego</div>
<div class="abs footer"></div>
<div class="abs fline1"></div>
<div class="abs fline2"></div>
<div class="abs krok">Krok 6 z 8</div>
<div class="abs redbox"></div>
<div class="abs btn" style="left:298px;top:710.5px;width:65px;letter-spacing:0">Biała lista</div>
<svg class="abs" style="left:886px;top:391px" width="10" height="12" viewBox="0 0 10 12"><path d="M1 1V10L3.2 8L4.8 11L6 10.4L4.6 7.6H7.4Z" fill="#fff" stroke="#333" stroke-width="0.9" stroke-linejoin="round"/></svg>
</body>
</html>
